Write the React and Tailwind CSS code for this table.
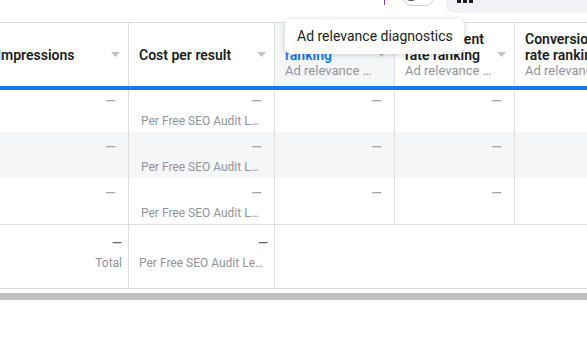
const sub = 'Per Free SEO Audit Lead'
const grid = 'grid grid-cols-[142px_146px_120px_120px_120px]'

function Caret() {
  return (
    <svg width="9" height="5" viewBox="0 0 9 5" className="shrink-0">
      <path d="M0 0h9L4.5 5z" fill="#bec3c9" />
    </svg>
  )
}

function HeadCell({ lines, note, active, shade }) {
  return (
    <div className={`flex items-center justify-between pl-[10px] pr-2 border-r border-[#dadde1] ${shade ? 'bg-[#f5f6f7]' : 'bg-white'}`}>
      <div className="min-w-0 flex flex-col leading-4">
        {lines.map((l) => (
          <span key={l} className={`truncate text-[14px] font-semibold ${active ? 'text-[#1877f2]' : 'text-[#1c1e21]'}`}>{l}</span>
        ))}
        {note && <span className="truncate text-[13px] text-[#90949c]">{note}</span>}
      </div>
      <Caret />
    </div>
  )
}

function Cell({ note, top }) {
  return (
    <div className={`flex flex-col items-end pl-3 pr-3 border-r border-[#dadde1] ${top}`}>
      <span className="text-[14px] leading-4 text-[#a3a6ab]">—</span>
      {note && <span className="mt-[4px] w-full truncate text-right text-[12px] leading-4 text-[#90949c]">{note}</span>}
    </div>
  )
}

function Row({ bg, h, top }) {
  return (
    <div className={`${grid} ${bg} ${h}`}>
      <Cell top={top} />
      <Cell top={top} note={sub} />
      <Cell top={top} />
      <Cell top={top} />
      <div />
    </div>
  )
}

export default function App() {
  return (
    <div className="relative w-[587px] h-[342px] overflow-hidden bg-white" style={{ fontFamily: 'Roboto, "Liberation Sans", sans-serif' }}>
      {/* toolbar, mostly scrolled out of view */}
      <div className="h-[22px] flex justify-end items-start overflow-hidden">
        <span className="w-px h-[5px] bg-[#8b2fc9] mr-[15px]" />
        <div className="w-[37px] h-[26px] -mt-[20px] mr-[9px] rounded-full border border-[#ccd0d5] bg-white flex items-center px-[2px]">
          <span className="w-[16px] h-[16px] rounded-full bg-[#444950]" />
        </div>
        <div className="w-[141px] h-[13px] rounded-bl-lg bg-[#f0f2f5] flex items-start gap-[2px] pl-[11px]">
          <span className="w-[4px] h-[3px] bg-[#1c1e21]" />
          <span className="w-[4px] h-[3px] bg-[#1c1e21]" />
          <span className="w-[4px] h-[3px] bg-[#1c1e21]" />
        </div>
      </div>

      <div className="-ml-[13px] w-[650px]">
        <div className={`${grid} h-[64px] border-t border-[#dadde1]`}>
          <HeadCell lines={['Impressions']} />
          <HeadCell lines={['Cost per result']} />
          <HeadCell lines={['Quality', 'ranking']} note="Ad relevance diagnostics" active shade />
          <HeadCell lines={['Engagement', 'rate ranking']} note="Ad relevance diagnostics" />
          <HeadCell lines={['Conversion', 'rate ranking']} note="Ad relevance diagnostics" />
        </div>
        <div className="h-[4px] bg-[#1877f2]" />

        <Row bg="bg-white" h="h-[42px]" top="pt-[3px]" />
        <Row bg="bg-[#f5f6f7]" h="h-[46px]" top="pt-[7px]" />
        <Row bg="bg-white" h="h-[46px]" top="pt-[7px]" />

        <div className={`${grid} h-[65px] border-y border-[#dadde1]`}>
          <div className="flex flex-col items-end pt-[10px] pr-[6px] border-r border-[#dadde1]">
            <span className="text-[13px] leading-4 font-bold text-[#606770]">—</span>
            <span className="mt-[4px] text-[12px] leading-4 text-[#90949c]">Total</span>
          </div>
          <div className="flex flex-col items-end pt-[10px] pl-[10px] pr-[6px] border-r border-[#dadde1]">
            <span className="text-[13px] leading-4 font-bold text-[#606770]">—</span>
            <span className="mt-[4px] w-full truncate text-[12px] leading-4 text-[#90949c]">{sub}</span>
          </div>
          <div />
          <div />
          <div />
        </div>
      </div>
      <div className="mt-[4px] h-[7px] bg-[#c1c1c1]" />

      <div className="absolute left-[285px] top-[19px] w-[179px] h-[35px] rounded-md bg-white shadow-[0_1px_6px_rgba(0,0,0,0.18)] flex items-center pl-3 text-[14px] text-[#1c1e21]">
        Ad relevance diagnostics
      </div>
    </div>
  )
}
